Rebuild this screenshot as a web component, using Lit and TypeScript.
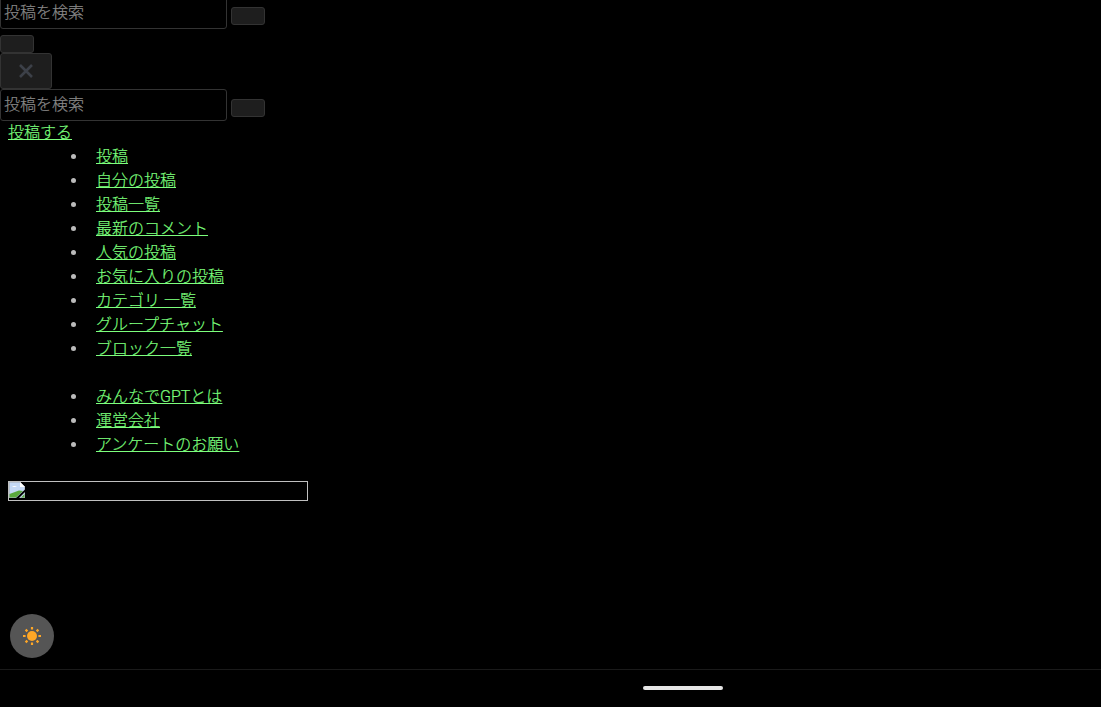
import { LitElement, html, css } from "lit";
import { customElement } from "lit/decorators.js";

const mainLinks = ["投稿", "自分の投稿", "投稿一覧", "最新のコメント", "人気の投稿", "お気に入りの投稿", "カテゴリ 一覧", "グループチャット", "ブロック一覧"];
const subLinks = ["みんなでGPTとは", "運営会社", "アンケートのお願い"];

@customElement("app-root")
export class AppRoot extends LitElement {
  static styles = css`
    :host {
      display: block;
      position: relative;
      height: 707px;
      overflow: hidden;
      background: #000;
      color: #ccc;
      font-family: Roboto, "Noto Sans CJK JP", sans-serif;
      font-size: 16px;
      font-weight: 300;
      line-height: 24px;
    }

    a {
      color: #7dff7d;
      -webkit-text-stroke: 0.2px #7dff7d;
    }

    .search {
      display: flex;
      align-items: center;
      height: 32px;
    }

    .search.first {
      margin-top: -3px;
    }

    .input {
      box-sizing: border-box;
      width: 227px;
      height: 32px;
      padding-left: 3px;
      border: 1px solid #333;
      border-radius: 3px;
      color: #8a8a8a;
      -webkit-text-stroke: 0.2px #8a8a8a;
      line-height: 30px;
      white-space: nowrap;
    }

    .btn {
      box-sizing: border-box;
      display: block;
      width: 34px;
      height: 18px;
      border: 1px solid #333;
      border-radius: 3px;
      background: #1e1e1e;
    }

    .search .btn {
      margin: 6px 0 0 4px;
    }

    .btn.lone {
      margin-top: 6px;
    }

    .close {
      box-sizing: border-box;
      display: flex;
      align-items: center;
      justify-content: center;
      width: 52px;
      height: 36px;
      border: 1px solid #333;
      border-radius: 3px;
      background: #1e1e1e;
    }

    .post {
      display: block;
      margin-top: -1px;
      padding: 2px 0 0 8px;
      line-height: 22px;
    }

    ul {
      margin: 0;
      padding: 0 0 0 71px;
      list-style: none;
    }

    ul + ul {
      margin-top: 24px;
    }

    li {
      display: flex;
      align-items: center;
      padding-top: 2px;
      line-height: 22px;
    }

    .dot {
      width: 5px;
      height: 5px;
      margin: -2px 20px 0 0;
      border-radius: 50%;
      background: #bbb;
    }

    .banner {
      box-sizing: border-box;
      width: 300px;
      height: 20px;
      margin: 25px 0 0 8px;
      border: 1px solid #c0c0c0;
    }

    .banner svg {
      display: block;
    }

    .theme {
      position: absolute;
      left: 10px;
      top: 614px;
      display: flex;
      align-items: center;
      justify-content: center;
      width: 44px;
      height: 44px;
      border-radius: 50%;
      background: #555;
    }

    .bottom {
      position: absolute;
      left: 0;
      right: 0;
      bottom: 0;
      height: 38px;
      border-top: 1px solid #1a1a1a;
      box-sizing: border-box;
    }

    .home {
      position: absolute;
      left: 643px;
      top: 16px;
      width: 80px;
      height: 4px;
      border-radius: 2px;
      background: #e6e6e6;
    }
  `;

  private search(first = false) {
    return html`
      <div class="search ${first ? "first" : ""}">
        <div class="input">投稿を検索</div>
        <span class="btn"></span>
      </div>
    `;
  }

  private item(text: string) {
    return html`<li><span class="dot"></span><a href="#">${text}</a></li>`;
  }

  render() {
    return html`
      ${this.search(true)}
      <span class="btn lone"></span>
      <div class="close">
        <svg width="14" height="14" viewBox="0 0 14 14">
          <path d="M1 1 L13 13 M13 1 L1 13" stroke="#3c4048" stroke-width="2.6" fill="none" />
        </svg>
      </div>
      ${this.search()}
      <a class="post" href="#">投稿する</a>
      <ul>${mainLinks.map((t) => this.item(t))}</ul>
      <ul>${subLinks.map((t) => this.item(t))}</ul>
      <div class="banner">
        <svg width="16" height="16" viewBox="0 0 16 16">
          <path d="M0 0 H11 L16 5 V16 H0 Z" fill="#c4d8f4" stroke="#a0a0a0" stroke-width="0.8" />
          <path d="M11 0 V5 H16 Z" fill="#fff" />
          <path d="M3 5 Q5 3 8 5 Z" fill="#fff" />
          <path d="M0.5 15.5 V12 L10 8.5 L14 9 L7 15.5 Z" fill="#5aa83c" />
          <path d="M7 16 L16 7.5 V10 L10 16 Z" fill="#000" />
          <path d="M12 15.5 L15.5 12 V15.5 Z" fill="#5aa83c" />
        </svg>
      </div>
      <div class="theme">
        <svg width="20" height="20" viewBox="0 0 20 20">
          <circle cx="10" cy="10" r="5" fill="#ffa726" />
          <path
            d="M10 1 V3.6 M10 16.4 V19 M1 10 H3.6 M16.4 10 H19 M3.6 3.6 L5.4 5.4 M14.6 14.6 L16.4 16.4 M3.6 16.4 L5.4 14.6 M14.6 5.4 L16.4 3.6"
            stroke="#ffa726"
            stroke-width="2.2"
          />
        </svg>
      </div>
      <div class="bottom"><div class="home"></div></div>
    `;
  }
}
